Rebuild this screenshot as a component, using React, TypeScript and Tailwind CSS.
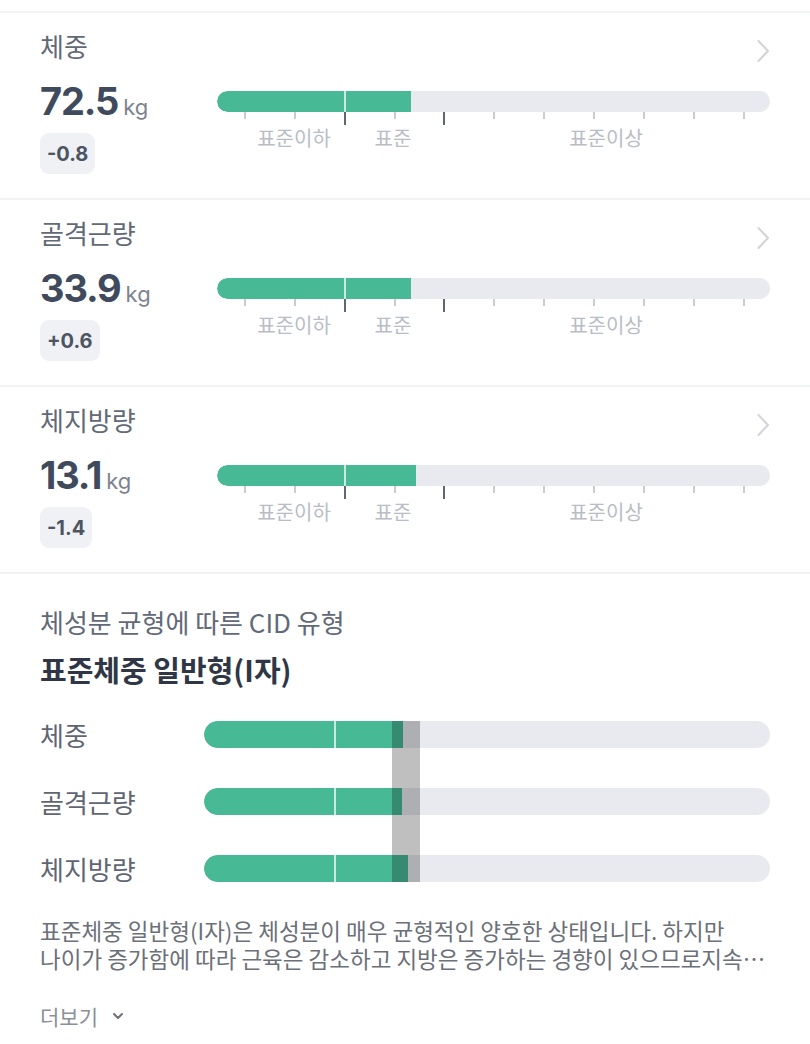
import { ChevronDown } from 'lucide-react';

type Metric = {
  label: string;
  value: string;
  diff: string;
  fill: number;
};

const metrics: Metric[] = [
  { label: '체중', value: '72.5', diff: '-0.8', fill: 194 },
  { label: '골격근량', value: '33.9', diff: '+0.6', fill: 194 },
  { label: '체지방량', value: '13.1', diff: '-1.4', fill: 199 },
];

const balance = [
  { label: '체중', fill: 199 },
  { label: '골격근량', fill: 198 },
  { label: '체지방량', fill: 204 },
];

const ticks = [27, 77, 127, 177, 226, 276, 326, 376, 426, 476, 526];

function ChevronRight() {
  return (
    <svg width="14" height="24" viewBox="0 0 14 24" fill="none" className="mt-[8px] shrink-0">
      <path d="M2.5 2l9.5 10-9.5 10" stroke="#d2d4d8" strokeWidth="2" strokeLinecap="round" strokeLinejoin="round" />
    </svg>
  );
}

function RangeBar({ fill }: { fill: number }) {
  return (
    <div className="relative mt-[12px] h-[70px] w-full">
      <div className="relative h-[21px] w-full overflow-hidden rounded-full bg-[#e8eaef]">
        <div className="h-full rounded-l-full bg-[#48b995]" style={{ width: fill }} />
        <div className="absolute left-[127px] top-0 h-full w-[2px] bg-white/70" />
      </div>
      {ticks.map((x, i) => {
        const strong = i === 2 || i === 4;
        return (
          <div
            key={x}
            className={strong ? 'absolute top-[21px] h-[13px] w-[2px] bg-[#5f6674]' : 'absolute top-[21px] h-[7px] w-[1.5px] bg-[#c9ccd2]'}
            style={{ left: x }}
          />
        );
      })}
      <span className="absolute left-[77px] top-[33px] -translate-x-1/2 whitespace-nowrap text-[20px] leading-[28px] text-[#b9bdc5]">표준이하</span>
      <span className="absolute left-[176px] top-[33px] -translate-x-1/2 whitespace-nowrap text-[20px] leading-[28px] text-[#b9bdc5]">표준</span>
      <span className="absolute left-[389px] top-[33px] -translate-x-1/2 whitespace-nowrap text-[20px] leading-[28px] text-[#b9bdc5]">표준이상</span>
    </div>
  );
}

function MetricSection({ metric }: { metric: Metric }) {
  return (
    <section className="border-t-2 border-[#f2f3f5] px-10 pt-[18px] pb-[24px]">
      <div className="flex h-[30px] items-start justify-between">
        <p className="text-[26px] leading-[30px] text-[#626977]">{metric.label}</p>
        <ChevronRight />
      </div>
      <div className="mt-[18px] flex">
        <div className="w-[177px] shrink-0">
          <div className="flex h-[44px] items-baseline">
            <span className="font-['Inter','Noto_Sans_CJK_KR',sans-serif] text-[38px] font-bold leading-[44px] tracking-[-0.03em] text-[#404a5d]">
              {metric.value}
            </span>
            <span className="ml-[5px] font-['Inter','Noto_Sans_CJK_KR',sans-serif] text-[22px] leading-none text-[#7d838e]">kg</span>
          </div>
          <div className="mt-[10px] inline-flex h-[41px] items-center rounded-[9px] bg-[#eff1f4] px-[7px]">
            <span className="font-['Inter','Noto_Sans_CJK_KR',sans-serif] text-[20px] font-bold leading-none text-[#4d5462]">{metric.diff}</span>
          </div>
        </div>
        <div className="flex-1">
          <RangeBar fill={metric.fill} />
        </div>
      </div>
    </section>
  );
}

export default function App() {
  return (
    <div className="min-h-[1044px] bg-white pt-[11px] font-['Noto_Sans_CJK_KR','Noto_Sans',sans-serif]">
      {metrics.map((m) => (
        <MetricSection key={m.label} metric={m} />
      ))}

      <section className="border-t-2 border-[#f2f3f5] px-10 pt-[33px]">
        <p className="text-[26px] leading-[30px] text-[#626977]">
          체성분 균형에 따른 CID 유형
        </p>
        <h2 className="mt-[15px] text-[29px] font-bold leading-[34px] text-[#2f3747]">표준체중 일반형(I자)</h2>

        <div className="relative mt-[35px] flex flex-col gap-[40px]">
          {balance.map((row) => (
            <div key={row.label} className="flex h-[27px] items-center">
              <span className="w-[164px] shrink-0 text-[26px] leading-[27px] text-[#5f6673]">{row.label}</span>
              <div className="relative h-[27px] flex-1 overflow-hidden rounded-full bg-[#e8eaef]">
                <div className="h-full rounded-l-full bg-[#48b995]" style={{ width: row.fill }} />
                <div className="absolute left-[130px] top-0 h-full w-[2px] bg-white/70" />
              </div>
            </div>
          ))}
          <div className="absolute left-[352px] top-0 h-full w-[28px] bg-black/25" />
        </div>

        <div className="mt-[34px] text-[22.5px] leading-[28px] text-[#6b7079]">
          <p className="whitespace-nowrap">표준체중 일반형(I자)은 체성분이 매우 균형적인 양호한 상태입니다. 하지만</p>
          <p className="truncate">나이가 증가함에 따라 근육은 감소하고 지방은 증가하는 경향이 있으므로지속적인 관리가 필요합니다.</p>
        </div>

        <button type="button" className="mt-[30px] flex items-center gap-[12px] text-[21px] leading-[28px] text-[#8a8f98]">
          더보기
          <ChevronDown className="h-[16px] w-[16px] text-[#6b7079]" strokeWidth={3} />
        </button>
      </section>
    </div>
  );
}
